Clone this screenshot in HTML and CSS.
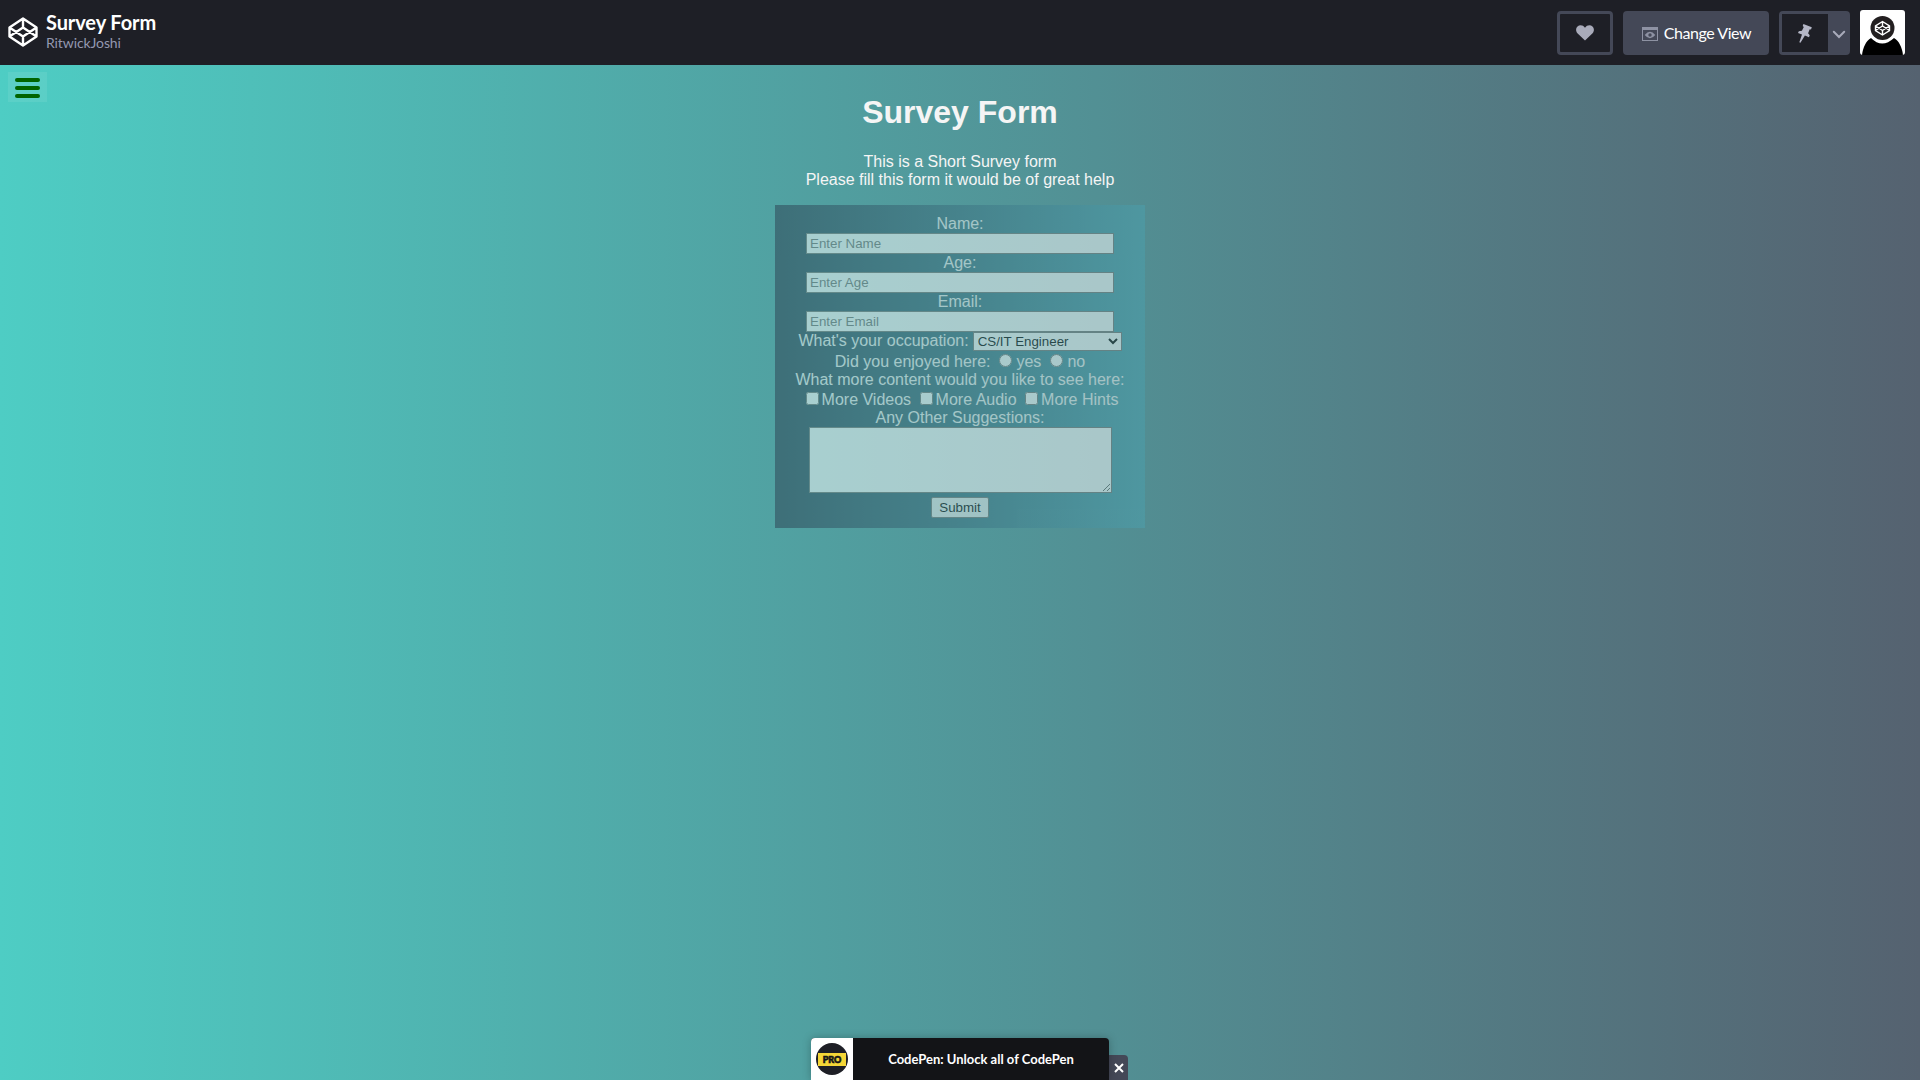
FILE: index.html
```html
<!DOCTYPE html>
<html lang="en">
<head>
<meta charset="utf-8">
<title>Survey Form</title>
<link rel="stylesheet" href="styles.css">
</head>
<body>
<header class="topbar">
  <svg class="logo" viewBox="0 0 30 30"><path d="M15 1.5 28.5 10.5v9L15 28.5 1.5 19.5v-9zM15 1.5v9M15 19.5v9M1.5 10.5 15 19.5l13.5-9M1.5 19.5 15 10.5l13.5 9"/></svg>
  <div class="pen">
    <div class="pen-title">Survey Form</div>
    <div class="pen-author">RitwickJoshi</div>
  </div>
  <div class="actions">
    <button class="btn heart" aria-label="Love"><svg width="18" height="16" viewBox="0 0 18 16"><path d="M9 15.5 1.4 8.2C-.4 6.2-.3 3 1.5 1.4 3.600-.5 7.200-.2 9 2.700 10.800-.2 14.400-.5 16.500 1.400 18.300 3 18.400 6.200 16.600 8.200z"/></svg></button>
    <button class="btn view"><svg width="16" height="14" viewBox="0 0 16 14"><path fill-rule="evenodd" d="M0 0h16v14H0zM1 3v10h14V3z"/><path fill-rule="evenodd" d="M2.700 8Q8 1.500 13.300 8 8 14.500 2.700 8zM8 6.300a1.700 1.700 0 1 0 0 3.400 1.700 1.700 0 0 0 0-3.400z"/></svg><span>Change View</span></button>
    <div class="btn pin">
      <button class="pin-main" aria-label="Pin"><svg width="14" height="19" viewBox="0 0 14 19"><path d="M5.400 0 13.800 3.200 13 5.500 11.700 5.300 10.100 9.200 11.700 11.200 11 13.200 6.900 11.600 2.500 18.700 1.300 18.300 4 10.500 0 9 .8 7.200 3.900 6.700 5.800 2.900 4.700 1.900z"/></svg></button>
      <button class="pin-more" aria-label="More"><svg width="14" height="9" viewBox="0 0 14 9"><path d="M1.800 1.800 7 7l5.200-5.200"/></svg></button>
    </div>
    <svg class="avatar" viewBox="0 0 45 45"><rect width="45" height="45" fill="#fff"/><path d="M2 45C3 37 6 31 11 28q11 11 23 0c5 3 8 9 9 17z"/><circle cx="22.500" cy="18" r="14" fill="#fff"/><circle cx="22.500" cy="18" r="12" fill="#231f20"/><path class="avatar-mark" d="M22.500 11.500 29.500 16v4.500l-7 4.500-7-4.500V16zM22.500 11.500V16M22.500 20.500V25M15.500 16l7 4.500 7-4.500M15.500 20.500l7-4.500 7 4.500"/></svg>
  </div>
</header>
<main class="page">
  <button class="menu" aria-label="Menu"><i></i><i></i><i></i></button>
  <section class="intro">
    <h1>Survey Form</h1>
    <p>This is a Short Survey form<br>Please fill this form it would be of great help</p>
  </section>
  <form class="survey">
    <label class="row" for="name">Name:</label>
    <input class="field" id="name" placeholder="Enter Name">
    <label class="row" for="age">Age:</label>
    <input class="field" id="age" placeholder="Enter Age">
    <label class="row" for="email">Email:</label>
    <input class="field" id="email" placeholder="Enter Email">
    <div class="row job"><label for="job">What's your occupation:</label><select id="job"><option>CS/IT Engineer</option></select></div>
    <div class="row enjoyed"><span>Did you enjoyed here:</span><label><input type="radio" name="e">yes</label><label><input type="radio" name="e">no</label></div>
    <div class="row">What more content would you like to see here:</div>
    <div class="row content"><label><input type="checkbox">More Videos</label><label><input type="checkbox">More Audio</label><label><input type="checkbox">More Hints</label></div>
    <label class="row" for="more">Any Other Suggestions:</label>
    <textarea id="more"></textarea>
    <button class="submit" type="button">Submit</button>
  </form>
</main>
<aside class="promo">
  <div class="promo-card">
    <div class="promo-icon"><div class="promo-disc"><span>PRO</span></div></div>
    <div class="promo-text">CodePen: Unlock all of CodePen</div>
  </div>
  <button class="promo-close" aria-label="Close"><svg width="10" height="10" viewBox="0 0 10 10"><path d="M1 1l8 8M9 1 1 9"/></svg></button>
</aside>
</body>
</html>
```
FILE: styles.css
```css
* { box-sizing: border-box; }
body {
  margin: 0;
  height: 1080px;
  overflow: hidden;
  display: flex;
  flex-direction: column;
  font-family: "Liberation Sans", Arial, sans-serif;
}
button { border: 0; padding: 0; font: inherit; }
svg { display: block; flex: none; }

.topbar {
  height: 65px;
  flex: none;
  display: flex;
  background: #1e1f26;
  padding: 0 15px 0 8px;
  font-family: Lato, sans-serif;
}
.logo { width: 30px; height: 30px; margin-top: 17px; fill: none; stroke: #fff; stroke-width: 2.4; stroke-linejoin: round; }
.pen { margin: 10px 0 0 8px; }
.pen-title { font-size: 20px; line-height: 24px; font-weight: 700; color: #fff; letter-spacing: -0.1px; }
.pen-author { font-size: 14px; line-height: 17px; color: #9498b0; letter-spacing: -0.1px; }
.actions { margin-left: auto; display: flex; gap: 10px; align-items: flex-start; padding-top: 11px; }
.btn { height: 44px; border-radius: 4px; background: #444857; display: flex; align-items: center; justify-content: center; fill: #a9abba; }
.heart { width: 56px; border: 3px solid #444857; background: #1e1f26; }
.view { width: 146px; gap: 6px; color: #fff; font-size: 16px; letter-spacing: -0.45px; }
.view span { margin-top: -2px; }
.view svg { fill: #8e92a3; margin: 2px 0 0 1px; }
.pin { width: 71px; padding: 3px 0 3px 3px; justify-content: flex-start; }
.pin-main { width: 46px; height: 38px; background: #1e1f26; display: flex; align-items: center; justify-content: center; }
.pin-main svg { fill: #b4b6c6; }
.pin-more { flex: 1; height: 38px; background: none; display: flex; align-items: center; justify-content: center; padding-top: 3px; }
.pin-more svg { fill: none; stroke: #a9abba; stroke-width: 2; stroke-linecap: round; }
.avatar { width: 45px; height: 45px; border-radius: 3px; margin-top: -1px; }
.avatar-mark { fill: none; stroke: #fff; stroke-width: 1.400; }

.page {
  flex: 1;
  position: relative;
  background: linear-gradient(to right, #4ecdc4, #556270);
  display: flex;
  flex-direction: column;
  align-items: center;
}
.menu {
  position: absolute;
  left: 8px;
  top: 7px;
  width: 39px;
  height: 30px;
  background: rgba(255, 255, 255, .08);
  display: flex;
  flex-direction: column;
  align-items: center;
  justify-content: center;
  gap: 4px;
  padding-top: 2px;
}
.menu i { width: 25px; height: 4px; border-radius: 2px; background: #006400; }
.intro { height: 140px; color: whitesmoke; text-align: center; }
.intro h1 { font-size: 32px; line-height: 36px; margin: 29px 0 23px; }
.intro p { font-size: 16px; line-height: 18px; margin: 0; }

.survey {
  width: 370px;
  height: 323px;
  padding-top: 10px;
  display: flex;
  flex-direction: column;
  align-items: center;
  background: linear-gradient(to right, #2c3e50, #4ca1af);
  opacity: .5;
  color: whitesmoke;
  font-size: 16px;
  line-height: 18px;
}
.row { height: 18px; flex: none; display: flex; justify-content: center; white-space: nowrap; }
.field {
  width: 308px;
  height: 21px;
  flex: none;
  border: 1px solid #767676;
  padding: 1px 3px;
  background: #fff;
  font: 13.333px "Liberation Sans", Arial, sans-serif;
}
.field::placeholder { color: #757575; }
.job { gap: 4px; }
.job select {
  width: 149px;
  height: 19px;
  padding: 0;
  border: 1px solid #767676;
  border-radius: 0;
  background: #fff;
  color: #000;
  font: 13.333px "Liberation Sans", Arial, sans-serif;
}
.row input { width: 13px; height: 13px; margin: 1px 3px 0 0; background: #fff; }
.row label { display: flex; }
.enjoyed { height: 20px; padding-top: 2px; margin-top: 1px; }
.enjoyed span { margin-right: 9px; }
.enjoyed label + label { margin-left: 9px; }
.enjoyed input { margin-right: 4px; }
.content { padding: 2px 0 0 4px; height: 20px; }
.content label + label { margin-left: 8.5px; }
textarea { width: 303px; height: 66px; flex: none; border: 1px solid #767676; margin: 0; background: #fff; }
.submit {
  width: 58px;
  height: 21px;
  margin-top: 4px;
  border: 1px solid #767676;
  border-radius: 2px;
  background: #efefef;
  color: #000;
  font: 13.333px "Liberation Sans", Arial, sans-serif;
}

.promo { position: absolute; left: 811px; bottom: 0; display: flex; align-items: flex-end; font-family: Lato, sans-serif; }
.promo-card { width: 298px; height: 42px; display: flex; background: #131417; border-radius: 4px 4px 0 0; overflow: hidden; box-shadow: 0 0 8px rgba(0, 0, 0, .25); z-index: 1; }
.promo-icon { width: 42px; background: #fff; display: flex; align-items: center; justify-content: center; }
.promo-disc { width: 32px; height: 32px; border-radius: 50%; background: #1e1f26; display: flex; align-items: center; justify-content: center; }
.promo-disc span { width: 28px; height: 13px; background: #f5d637; color: #131417; font-size: 9px; line-height: 13px; font-weight: 900; text-align: center; -webkit-text-stroke: .6px #131417; }
.promo-text { flex: 1; color: #fff; font-size: 13px; font-weight: 700; line-height: 42px; text-align: center; }
.promo-close { width: 19px; height: 25px; background: #444857; border-radius: 0 4px 0 0; display: flex; align-items: center; justify-content: center; padding-top: 1px; }
.promo-close svg { stroke: #fff; stroke-width: 2; }
```
